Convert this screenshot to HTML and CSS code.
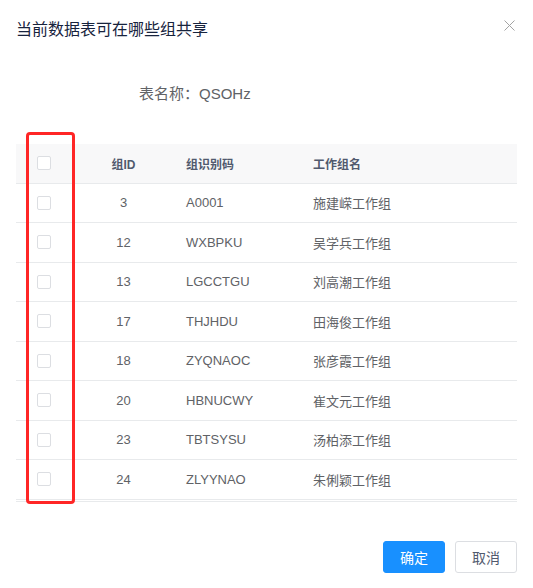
FILE: index.html
```html
<!DOCTYPE html>
<html lang="zh">
  <head>
    <meta charset="UTF-8" />
    <title>共享设置</title>
    <link rel="stylesheet" href="styles.css">
  </head>
  <body>
    <div class="modal">
      <div class="modal-header">
        <div class="modal-title">当前数据表可在哪些组共享</div>
        <svg class="modal-close" width="11" height="11" viewBox="0 0 11 11">
          <path d="M0.5 0.5 L10.5 10.5 M10.5 0.5 L0.5 10.5" stroke="#a3a3a3" stroke-width="1" fill="none"/>
        </svg>
      </div>

      <div class="table-name">表名称：QSOHz</div>

      <div class="table">
        <div class="row head">
          <div class="cell sel"><span class="checkbox"></span></div>
          <div class="cell center">组ID</div>
          <div class="cell">组识别码</div>
          <div class="cell">工作组名</div>
        </div>
        <div class="row">
          <div class="cell sel"><span class="checkbox"></span></div>
          <div class="cell center">3</div>
          <div class="cell">A0001</div>
          <div class="cell">施建嵘工作组</div>
        </div>
        <div class="row">
          <div class="cell sel"><span class="checkbox"></span></div>
          <div class="cell center">12</div>
          <div class="cell">WXBPKU</div>
          <div class="cell">吴学兵工作组</div>
        </div>
        <div class="row">
          <div class="cell sel"><span class="checkbox"></span></div>
          <div class="cell center">13</div>
          <div class="cell">LGCCTGU</div>
          <div class="cell">刘高潮工作组</div>
        </div>
        <div class="row">
          <div class="cell sel"><span class="checkbox"></span></div>
          <div class="cell center">17</div>
          <div class="cell">THJHDU</div>
          <div class="cell">田海俊工作组</div>
        </div>
        <div class="row">
          <div class="cell sel"><span class="checkbox"></span></div>
          <div class="cell center">18</div>
          <div class="cell">ZYQNAOC</div>
          <div class="cell">张彦霞工作组</div>
        </div>
        <div class="row">
          <div class="cell sel"><span class="checkbox"></span></div>
          <div class="cell center">20</div>
          <div class="cell">HBNUCWY</div>
          <div class="cell">崔文元工作组</div>
        </div>
        <div class="row">
          <div class="cell sel"><span class="checkbox"></span></div>
          <div class="cell center">23</div>
          <div class="cell">TBTSYSU</div>
          <div class="cell">汤柏添工作组</div>
        </div>
        <div class="row">
          <div class="cell sel"><span class="checkbox"></span></div>
          <div class="cell center">24</div>
          <div class="cell">ZLYYNAO</div>
          <div class="cell">朱俐颖工作组</div>
        </div>
      </div>

      <div class="modal-footer">
        <button class="btn btn-primary">确定</button>
        <button class="btn">取消</button>
      </div>

      <div class="highlight"></div>
    </div>
  </body>
</html>
```

FILE: styles.css
```css
body {
  margin: 0;
  font-family: "Liberation Sans", "Noto Sans CJK SC", sans-serif;
  background: #fff;
  color: #606266;
}

.modal {
  position: relative;
  padding: 19px 16px 0;
}

.modal-header {
  display: flex;
  justify-content: space-between;
  align-items: flex-start;
}

.modal-title {
  font-size: 16px;
  line-height: 22px;
  color: #17233d;
}

.modal-close {
  display: block;
  margin-top: 1px;
  margin-right: 2px;
}

.table-name {
  margin-top: 43px;
  padding-left: 123px;
  font-size: 15px;
  line-height: 20px;
  color: #606266;
}

.table {
  margin-top: 40px;
  padding-bottom: 1px;
  border-bottom: 1px solid #e8eaec;
}

.row {
  display: grid;
  grid-template-columns: 55px 105px 127px 1fr;
  align-items: center;
  height: 39.5px;
  box-sizing: border-box;
  border-bottom: 1px solid #e8eaec;
  font-size: 13px;
}

.row.head {
  background: #f8f8f9;
  font-size: 12px;
  font-weight: bold;
  color: #515a6e;
}

.cell {
  padding: 0 10px;
  white-space: nowrap;
}

.cell.sel {
  padding: 0;
  display: flex;
  justify-content: center;
}

.cell.center {
  text-align: center;
}

.checkbox {
  display: block;
  width: 14px;
  height: 14px;
  box-sizing: border-box;
  border: 1px solid #dcdee2;
  border-radius: 2px;
  background: #fff;
}

.modal-footer {
  display: flex;
  justify-content: flex-end;
  gap: 10px;
  margin-top: 39px;
}

.btn {
  height: 32px;
  padding: 0 16px;
  font-family: inherit;
  font-size: 14px;
  color: #515a6e;
  background: #fff;
  border: 1px solid #dcdee2;
  border-radius: 3px;
}

.btn-primary {
  color: #fff;
  background: #1890ff;
  border-color: #1890ff;
}

.highlight {
  position: absolute;
  top: 132px;
  left: 26px;
  width: 49px;
  height: 372px;
  box-sizing: border-box;
  border: 3px solid #ff2626;
  border-radius: 4px;
}
```
